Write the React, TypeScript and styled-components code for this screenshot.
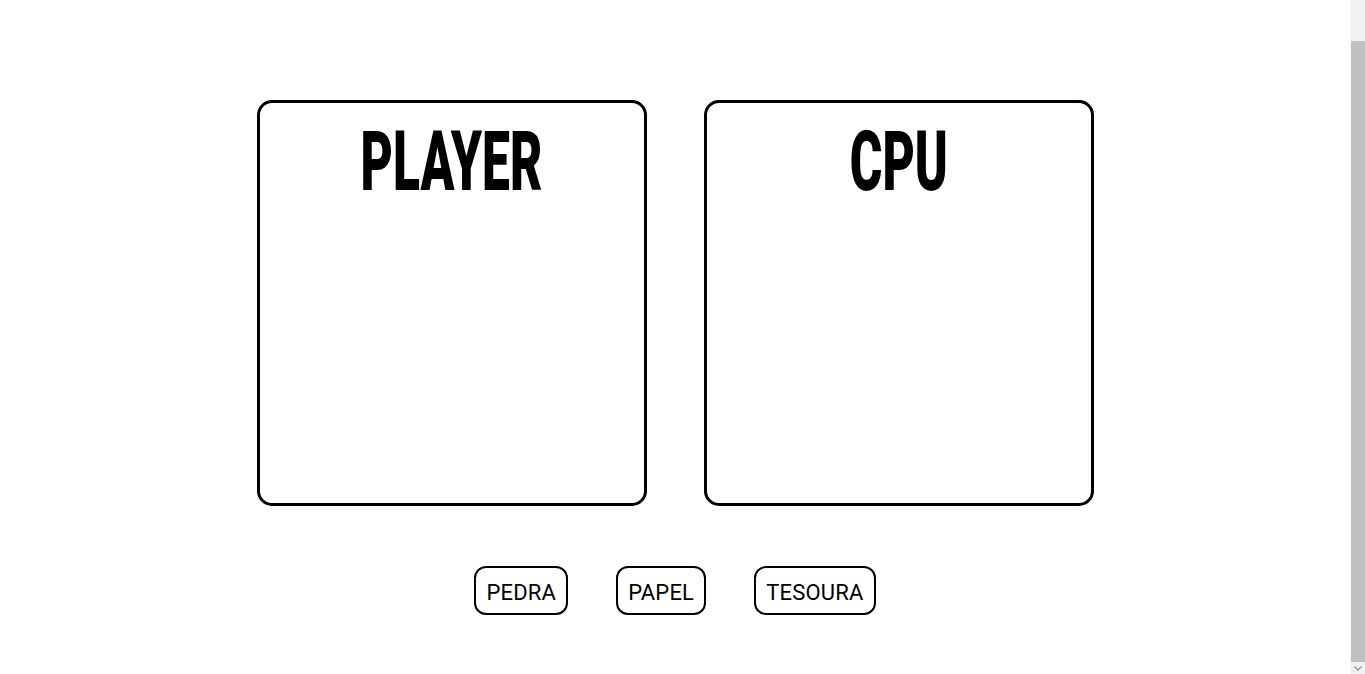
import React from "react";
import styled, { createGlobalStyle } from "styled-components";

const Global = createGlobalStyle`
  html, body { margin: 0; padding: 0; background: #fff; }
  body { font-family: "Roboto", "Liberation Sans", Arial, sans-serif; overflow: hidden; }
`;

const Shell = styled.div`
  display: flex;
  height: 100vh;
`;

const Page = styled.main`
  flex: 1;
  display: flex;
  flex-direction: column;
  align-items: center;
  padding-top: 100px;
`;

const Board = styled.section`
  display: flex;
  justify-content: center;
  gap: 57px;
`;

const Card = styled.div`
  box-sizing: border-box;
  width: 390px;
  height: 406px;
  border: 3px solid #000;
  border-radius: 15px;
  display: flex;
  flex-direction: column;
  align-items: center;
`;

const Title = styled.h1`
  margin: 17px 0 0;
  font-family: "Roboto", "Liberation Sans", sans-serif;
  font-weight: 900;
  font-size: 83px;
  line-height: 1;
  color: #000;
  transform: scaleX(0.6);
  white-space: nowrap;
`;

const Controls = styled.div`
  display: flex;
  gap: 48px;
  margin-top: 60px;
`;

const Choice = styled.button`
  box-sizing: border-box;
  height: 49px;
  padding: 4px 10px 0;
  border: 2px solid #000;
  border-radius: 12px;
  background: #fff;
  color: #000;
  font-family: "Roboto", "Liberation Sans", sans-serif;
  font-size: 22px;
  letter-spacing: 0.2px;
  cursor: pointer;
`;

const Rail = styled.aside`
  flex: 0 0 14px;
  display: flex;
  flex-direction: column;
  background: #f1f1f1;
  border-left: 1px solid #f7f7f7;
`;

const RailGap = styled.div`
  height: 41px;
`;

const Thumb = styled.div`
  flex: 1;
  background: #c1c1c1;
`;

const Arrow = styled.div`
  height: 12px;
  display: flex;
  align-items: center;
  justify-content: center;
`;

export default function App() {
  return (
    <>
      <Global />
      <Shell>
        <Page>
          <Board>
            <Card>
              <Title>PLAYER</Title>
            </Card>
            <Card>
              <Title>CPU</Title>
            </Card>
          </Board>
          <Controls>
            <Choice>PEDRA</Choice>
            <Choice>PAPEL</Choice>
            <Choice>TESOURA</Choice>
          </Controls>
        </Page>
        <Rail>
          <RailGap />
          <Thumb />
          <Arrow>
            <svg width="8" height="5" viewBox="0 0 8 5">
              <path d="M0.5 0.5 L4 4 L7.5 0.5" fill="none" stroke="#a3a3a3" strokeWidth="1.6" />
            </svg>
          </Arrow>
        </Rail>
      </Shell>
    </>
  );
}
